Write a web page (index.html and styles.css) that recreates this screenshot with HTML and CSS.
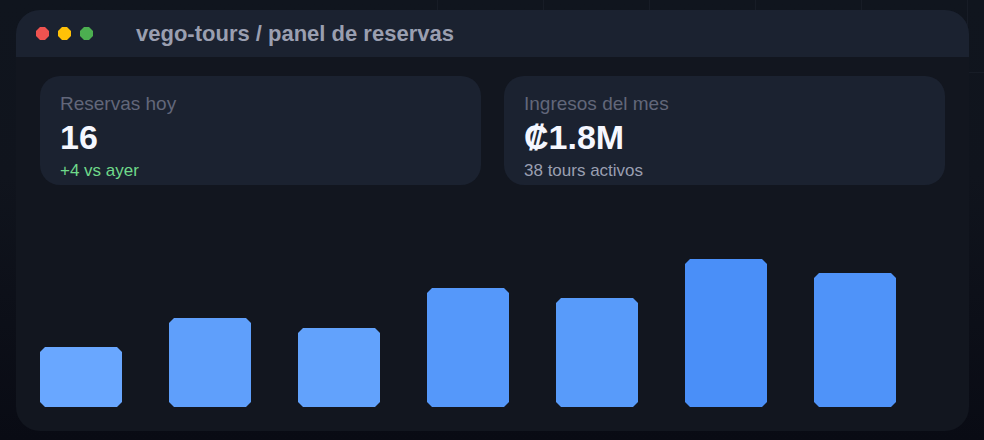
FILE: index.html
```html
<!DOCTYPE html>
<html lang="es">
    <head>
        <meta charset="UTF-8" />
        <meta name="viewport" content="width=device-width, initial-scale=1.0" />
        <title>vego-tours / panel de reservas</title>
        <link rel="stylesheet" href="styles.css">
    </head>
    <body>
        <main class="window">
            <header class="titlebar">
                <div class="dots">
                    <span class="dot red"></span>
                    <span class="dot yellow"></span>
                    <span class="dot green"></span>
                </div>
                <h1>vego-tours / panel de reservas</h1>
            </header>

            <div class="content">
                <section class="stats">
                    <div class="card">
                        <div class="label">Reservas hoy</div>
                        <div class="value">16</div>
                        <div class="note up">+4 vs ayer</div>
                    </div>
                    <div class="card">
                        <div class="label">Ingresos del mes</div>
                        <div class="value">₡1.8M</div>
                        <div class="note">38 tours activos</div>
                    </div>
                </section>

                <!-- weekly chart, one bar per day -->
                <section class="chart">
                    <div class="bar" style="height: 60px; background-color: #69a7ff;"></div>
                    <div class="bar" style="height: 89px; background-color: #5f9ffb;"></div>
                    <div class="bar" style="height: 79px; background-color: #62a2fc;"></div>
                    <div class="bar" style="height: 119px; background-color: #5598fa;"></div>
                    <div class="bar" style="height: 109px; background-color: #589bfa;"></div>
                    <div class="bar" style="height: 148px; background-color: #4a8ff8;"></div>
                    <div class="bar" style="height: 134px; background-color: #4f93f9;"></div>
                </section>
            </div>
        </main>
    </body>
</html>
```
FILE: styles.css
```css
* {
    box-sizing: border-box;
}

body {
    margin: 0;
    padding: 10px 15px 9px 16px;
    min-height: 100vh;
    font-family: "Liberation Sans", Arial, sans-serif;
    /* faint grid on the right over a dark fade */
    background-image:
        linear-gradient(#171c26, #171c26),
        repeating-linear-gradient(to right, #171c26 0, #171c26 1px, transparent 1px, transparent 106px),
        linear-gradient(#10151e, #10141d 40%, #090b14);
    background-size: 17px 1px, 547px 72px, 100% 100%;
    background-position: right 0 top 72px, right 0 top 0, 0 0;
    background-repeat: no-repeat;
}

.window {
    background-color: #12161f;
    border-radius: 24px;
    overflow: hidden;
}

.titlebar {
    display: flex;
    align-items: center;
    gap: 43px;
    height: 47px;
    padding: 0 20px;
    background-color: #1b2230;
}

.dots {
    display: flex;
    gap: 9px;
}

.dot {
    width: 13px;
    height: 13px;
    clip-path: polygon(4px 0, 9px 0, 100% 4px, 100% 9px, 9px 100%, 4px 100%, 0 9px, 0 4px);
}

.red {
    background-color: #ef5350;
}

.yellow {
    background-color: #ffc107;
}

.green {
    background-color: #4caf50;
}

h1 {
    margin: 0;
    font-size: 22px;
    line-height: 26px;
    color: #9a9fb0;
}

.content {
    padding: 19px 24px 24px;
}

.stats {
    display: grid;
    grid-template-columns: 1fr 1fr;
    gap: 23px;
}

.card {
    padding: 16px 20px 2px;
    background-color: #1b2230;
    border-radius: 20px;
}

.label {
    font-size: 19px;
    line-height: 24px;
    color: #62677a;
}

.value {
    font-size: 34px;
    line-height: 42px;
    font-weight: bold;
    color: #f5f7ff;
}

.note {
    font-size: 17px;
    line-height: 25px;
    color: #9a9fb0;
}

.up {
    color: #6fd98a;
}

.chart {
    display: grid;
    grid-template-columns: repeat(7, 1fr);
    align-items: end;
    height: 148px;
    margin-top: 74px;
    padding-right: 2px;
}

.bar {
    width: 82px;
    clip-path: polygon(5px 0, calc(100% - 5px) 0, 100% 5px, 100% calc(100% - 5px), calc(100% - 5px) 100%, 5px 100%, 0 calc(100% - 5px), 0 5px);
}
```
